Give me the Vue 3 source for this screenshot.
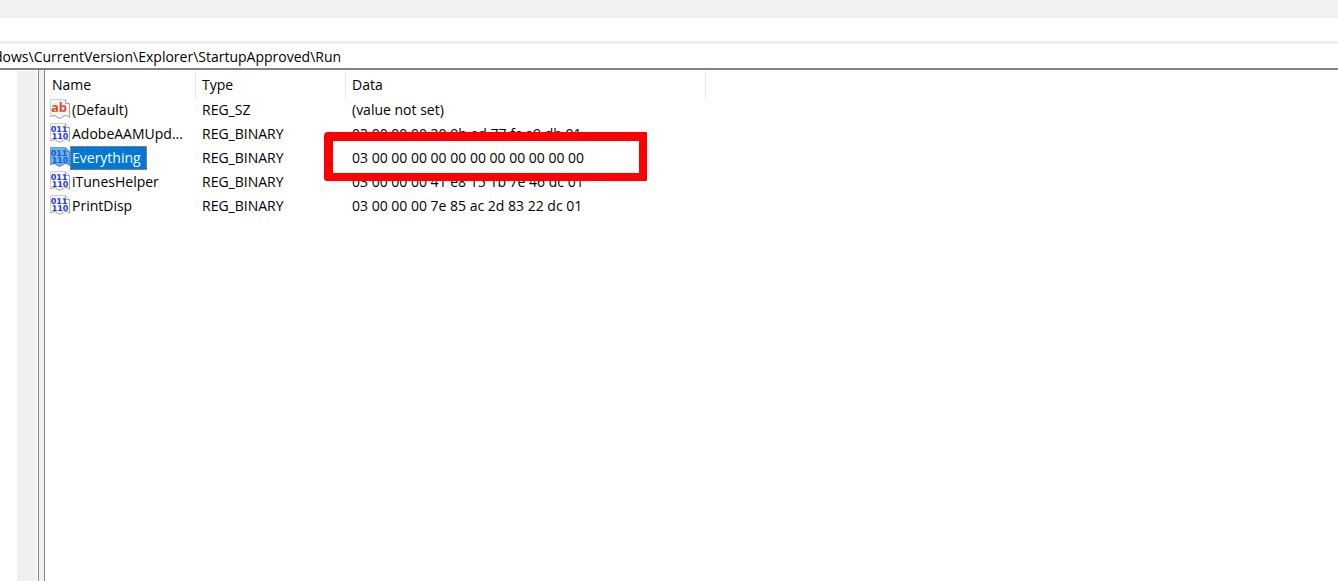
<script setup>
import { ref } from 'vue'

const address = ref('dows\\CurrentVersion\\Explorer\\StartupApproved\\Run')

const values = [
  { name: '(Default)', type: 'REG_SZ', data: '(value not set)', text: true },
  { name: 'AdobeAAMUpd...', type: 'REG_BINARY', data: '03 00 00 00 20 9b ed 77 fc e9 db 01' },
  { name: 'Everything', type: 'REG_BINARY', data: '03 00 00 00 00 00 00 00 00 00 00 00', selected: true },
  { name: 'iTunesHelper', type: 'REG_BINARY', data: '03 00 00 00 41 e8 15 1b 7e 46 dc 01' },
  { name: 'PrintDisp', type: 'REG_BINARY', data: '03 00 00 00 7e 85 ac 2d 83 22 dc 01' },
]
</script>

<template>
  <div class="window">
    <div class="title-strip"></div>
    <div class="menu-strip"></div>
    <div class="address-bar">
      <input v-model="address" class="address" type="text" aria-label="Address" spellcheck="false" />
    </div>
    <div class="panes">
      <div class="tree"></div>
      <div class="scrollbar"></div>
      <div class="splitter"></div>
      <main class="list">
        <table>
          <colgroup>
            <col class="col-name" />
            <col class="col-type" />
            <col class="col-data" />
          </colgroup>
          <thead>
            <tr>
              <th scope="col">Name</th>
              <th scope="col">Type</th>
              <th scope="col">Data</th>
            </tr>
          </thead>
          <tbody>
            <tr v-for="v in values" :key="v.name" :class="{ selected: v.selected }">
              <td>
                <div class="name">
                  <svg class="icon" viewBox="0 0 20 20" aria-hidden="true">
                    <path class="sheet" d="M.5 .5H15.500L19.500 4.500V18.500C17 16 15 16 13 17.500S9 20 7 18S3 16.500 .5 17.500Z" />
                    <path class="edge" d="M15.500 .5V4.500H19.500V18.500C17 16 15 16 13 17.500S9 20 7 18S3 16.500 .5 17.500" />
                    <text v-if="v.text" class="glyph-text" x="9" y="13" text-anchor="middle">ab</text>
                    <g v-else class="glyph-bits">
                      <text x="9" y="9" text-anchor="middle">011</text>
                      <text x="10" y="16" text-anchor="middle">110</text>
                    </g>
                  </svg>
                  <span class="label">{{ v.name }}</span>
                </div>
              </td>
              <td>{{ v.type }}</td>
              <td>
                <span v-if="v.selected" class="marker"></span>
                <span class="data">{{ v.data }}</span>
              </td>
            </tr>
          </tbody>
        </table>
      </main>
    </div>
  </div>
</template>

<style>
body {
  margin: 0;
  background: #fff;
}
</style>

<style scoped>
.window {
  display: flex;
  flex-direction: column;
  min-height: 100vh;
  background: #fff;
  color: #000;
  font: 14px/24px "Segoe UI", "Open Sans", "Noto Sans", sans-serif;
}
.title-strip {
  height: 18px;
  background: #f2f2f2;
}
.menu-strip {
  height: 23px;
  border-bottom: 3px solid #efefef;
}
.address-bar {
  display: flex;
  height: 24px;
  overflow: hidden;
  border-bottom: 2px solid #828388;
}
.address {
  flex: 1;
  min-width: 0;
  padding: 2px 0 0;
  border: 0;
  outline: 0;
  background: transparent;
  color: inherit;
  font: inherit;
  text-indent: -6px;
}
.panes {
  display: flex;
  flex: 1;
}
.tree {
  width: 17px;
}
.scrollbar {
  width: 20px;
  margin: 1px 1px 0 0;
  background: #f0f0f0;
}
.splitter {
  width: 5px;
  border: solid #828790;
  border-width: 0 1px;
  background: #f0f0f0;
}
.list {
  flex: 1;
  padding-top: 1px;
}
table {
  width: 661px;
  table-layout: fixed;
  border-collapse: separate;
  border-spacing: 0;
}
.col-name {
  width: 151px;
}
.col-type {
  width: 150px;
}
.col-data {
  width: 360px;
}
th,
td {
  padding: 0 0 0 6px;
  text-align: left;
  font-weight: 400;
  white-space: nowrap;
}
th {
  height: 27px;
  border-right: 1px solid #e5e5e5;
}
th:first-child {
  padding-left: 7px;
}
td {
  position: relative;
  height: 24px;
}
td:first-child {
  padding-left: 5px;
}
.name {
  display: flex;
  align-items: center;
  height: 24px;
}
.icon {
  flex: none;
  width: 20px;
  height: 20px;
  margin-bottom: 2px;
}
.label {
  box-sizing: border-box;
  height: 24px;
  padding: 0 2px;
}
.selected .label {
  padding: 0 5px 0 1px;
  border: 1px dotted #ff8728;
  background: #0078d7;
  color: #fff;
  line-height: 22px;
}
.sheet {
  fill: #f5f5f8;
  stroke: #d0d0d2;
}
.edge {
  fill: none;
  stroke: #a4a6aa;
}
.glyph-text {
  fill: #dc4a26;
  font: bold 13px "Open Sans", sans-serif;
}
.glyph-bits {
  fill: #2036d8;
  font: bold 8px "DejaVu Sans", sans-serif;
  text-rendering: geometricPrecision;
}
.selected .sheet {
  fill: #6fb2ea;
  stroke: #5fa3dc;
}
.selected .edge {
  stroke: #4a8fca;
}
.selected .glyph-bits {
  fill: #1459cf;
}
.marker {
  position: absolute;
  top: -14px;
  left: -22px;
  box-sizing: border-box;
  width: 323px;
  height: 49px;
  border: solid #f00;
  border-width: 9px 8px 8px 9px;
  border-radius: 4px 1px 1px 3px;
  background: #fff;
}
.data {
  position: relative;
}
.selected td:last-child {
  z-index: 1;
}
</style>
